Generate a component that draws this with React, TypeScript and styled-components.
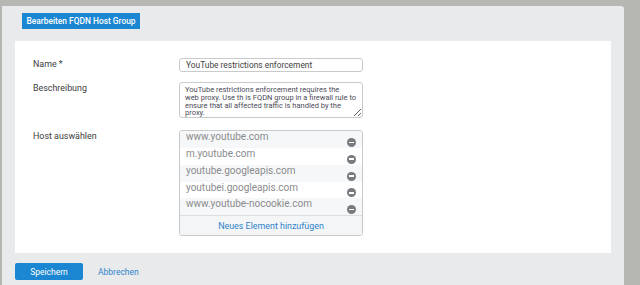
import styled, { createGlobalStyle } from "styled-components";

const GlobalStyle = createGlobalStyle`
  html, body {
    margin: 0;
    padding: 0;
    background: #b6b7b2;
  }
  body {
    font-family: "Roboto", "Liberation Sans", sans-serif;
  }
`;

const Frame = styled.div`
  height: 285px;
  padding: 6px 16px 0 2px;
  box-sizing: border-box;
  overflow: hidden;
`;

const Panel = styled.div`
  height: 100%;
  background: #e9eaec;
  border-top-right-radius: 3px;
  padding: 7px 13px 0;
  box-sizing: border-box;
  display: flex;
  flex-direction: column;
`;

const HeaderTag = styled.div`
  align-self: flex-start;
  margin-left: 7px;
  width: 118px;
  height: 16px;
  display: flex;
  align-items: center;
  justify-content: center;
  background: #1b87d2;
  color: #fff;
  font-size: 8.4px;
  font-weight: 500;
`;

const Card = styled.div`
  margin-top: 12px;
  height: 212px;
  background: #fff;
  box-sizing: border-box;
  padding: 17px 18px;
  display: grid;
  grid-template-columns: 146px 184px;
  row-gap: 10px;
  align-content: start;
`;

const Label = styled.div<{ $gap?: number }>`
  font-size: 8.9px;
  color: #3c3c3c;
  padding-top: 1px;
  margin-top: ${({ $gap }) => $gap ?? 0}px;
`;

const TextInput = styled.input`
  height: 14px;
  box-sizing: border-box;
  border: 1px solid #c9cacc;
  border-radius: 3px;
  padding: 0 6px;
  font: inherit;
  font-size: 8.4px;
  color: #444;
  outline: none;
`;

const TextArea = styled.textarea`
  height: 36px;
  box-sizing: border-box;
  border: 1px solid #c9cacc;
  border-radius: 3px;
  padding: 3px 0 2px 5px;
  font: inherit;
  font-size: 7.5px;
  line-height: 7.8px;
  color: #4a4a58;
  outline: none;
  overflow: hidden;
  white-space: pre;
  resize: vertical;
`;

const HostList = styled.div<{ $gap?: number }>`
  margin-top: ${({ $gap }) => $gap ?? 0}px;
  border: 1px solid #c9cacc;
  border-radius: 3px;
  overflow: hidden;
  display: flex;
  flex-direction: column;
`;

const HostRow = styled.div<{ $shade: boolean }>`
  height: 17px;
  display: flex;
  justify-content: space-between;
  padding: 0 6px 0 6px;
  background: ${({ $shade }) => ($shade ? "#f6f7f8" : "#fff")};
  font-size: 10px;
  color: #8a8b8e;
`;

const HostName = styled.span`
  line-height: 12px;
`;

const RemoveIcon = styled.span`
  align-self: flex-end;
  margin-bottom: 1px;
  width: 9px;
  height: 9px;
  border-radius: 50%;
  background: #777a7e;
  display: flex;
  align-items: center;
  justify-content: center;
  &::after {
    content: "";
    width: 5px;
    height: 1.5px;
    background: #fff;
  }
`;

const AddRow = styled.div`
  height: 19px;
  border-top: 1px solid #dcdde0;
  background: #f4f5f7;
  display: flex;
  align-items: center;
  justify-content: center;
  font-size: 8.9px;
  color: #2f83c9;
`;

const Actions = styled.div`
  margin-top: 10px;
  display: flex;
  align-items: center;
  gap: 15px;
`;

const PrimaryButton = styled.button`
  width: 68px;
  height: 17px;
  border: none;
  border-radius: 2px;
  background: #1b87d2;
  color: #fff;
  font: inherit;
  font-size: 8.5px;
  padding: 0;
`;

const LinkButton = styled.span`
  font-size: 8.5px;
  color: #2f83c9;
`;

const hosts = [
  "www.youtube.com",
  "m.youtube.com",
  "youtube.googleapis.com",
  "youtubei.googleapis.com",
  "www.youtube-nocookie.com",
];

const description = [
  "YouTube restrictions enforcement requires the",
  "web proxy. Use th is FQDN group in a firewall rule to",
  "ensure that all affected traffic is handled by the",
  "proxy.",
].join("\n");

export default function App() {
  return (
    <>
      <GlobalStyle />
      <Frame>
        <Panel>
          <HeaderTag>Bearbeiten FQDN Host Group</HeaderTag>
          <Card>
            <Label>Name *</Label>
            <TextInput readOnly value="YouTube restrictions enforcement" />
            <Label>Beschreibung</Label>
            <TextArea readOnly value={description} />
            <Label $gap={2}>Host auswählen</Label>
            <HostList $gap={2}>
              {hosts.map((h, i) => (
                <HostRow key={h} $shade={i % 2 === 0}>
                  <HostName>{h}</HostName>
                  <RemoveIcon />
                </HostRow>
              ))}
              <AddRow>Neues Element hinzufügen</AddRow>
            </HostList>
          </Card>
          <Actions>
            <PrimaryButton>Speichern</PrimaryButton>
            <LinkButton>Abbrechen</LinkButton>
          </Actions>
        </Panel>
      </Frame>
    </>
  );
}
